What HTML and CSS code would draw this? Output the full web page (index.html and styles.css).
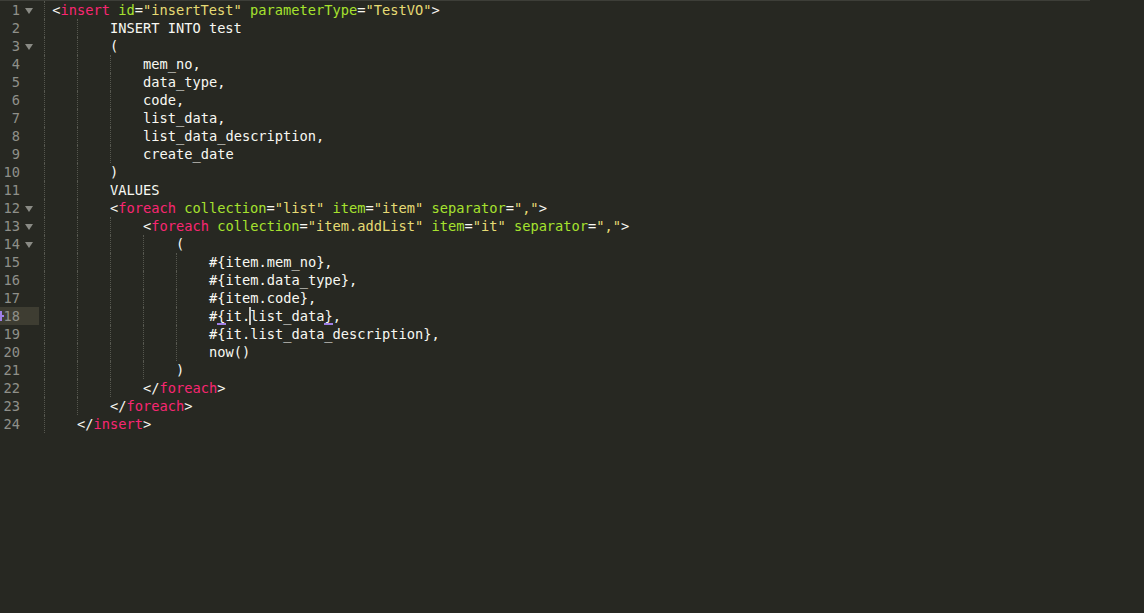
FILE: index.html
```html
<!DOCTYPE html>
<html>
<head>
<meta charset="utf-8">
<link rel="stylesheet" href="styles.css">
</head>
<body>
<div class="topbar"></div>
<div class="editor">
  <div class="line"><div class="gutter"><span class="num">1</span><span class="fold"></span></div><div class="code"><span class="sp"></span><span class="p">&lt;</span><span class="t">insert</span> <span class="a">id</span>=<span class="s">"insertTest"</span> <span class="a">parameterType</span>=<span class="s">"TestVO"</span><span class="p">&gt;</span></div></div>
  <div class="line"><div class="gutter"><span class="num">2</span><span class="nofold"></span></div><div class="code"><span class="tab"></span><span class="tab"></span>INSERT INTO test</div></div>
  <div class="line"><div class="gutter"><span class="num">3</span><span class="fold"></span></div><div class="code"><span class="tab"></span><span class="tab"></span>(</div></div>
  <div class="line"><div class="gutter"><span class="num">4</span><span class="nofold"></span></div><div class="code"><span class="tab"></span><span class="tab"></span><span class="tab"></span>mem_no,</div></div>
  <div class="line"><div class="gutter"><span class="num">5</span><span class="nofold"></span></div><div class="code"><span class="tab"></span><span class="tab"></span><span class="tab"></span>data_type,</div></div>
  <div class="line"><div class="gutter"><span class="num">6</span><span class="nofold"></span></div><div class="code"><span class="tab"></span><span class="tab"></span><span class="tab"></span>code,</div></div>
  <div class="line"><div class="gutter"><span class="num">7</span><span class="nofold"></span></div><div class="code"><span class="tab"></span><span class="tab"></span><span class="tab"></span>list_data,</div></div>
  <div class="line"><div class="gutter"><span class="num">8</span><span class="nofold"></span></div><div class="code"><span class="tab"></span><span class="tab"></span><span class="tab"></span>list_data_description,</div></div>
  <div class="line"><div class="gutter"><span class="num">9</span><span class="nofold"></span></div><div class="code"><span class="tab"></span><span class="tab"></span><span class="tab"></span>create_date</div></div>
  <div class="line"><div class="gutter"><span class="num">10</span><span class="nofold"></span></div><div class="code"><span class="tab"></span><span class="tab"></span>)</div></div>
  <div class="line"><div class="gutter"><span class="num">11</span><span class="nofold"></span></div><div class="code"><span class="tab"></span><span class="tab"></span>VALUES</div></div>
  <div class="line"><div class="gutter"><span class="num">12</span><span class="fold"></span></div><div class="code"><span class="tab"></span><span class="tab"></span><span class="p">&lt;</span><span class="t">foreach</span> <span class="a">collection</span>=<span class="s">"list"</span> <span class="a">item</span>=<span class="s">"item"</span> <span class="a">separator</span>=<span class="s">","</span><span class="p">&gt;</span></div></div>
  <div class="line"><div class="gutter"><span class="num">13</span><span class="fold"></span></div><div class="code"><span class="tab"></span><span class="tab"></span><span class="tab"></span><span class="p">&lt;</span><span class="t">foreach</span> <span class="a">collection</span>=<span class="s">"item.addList"</span> <span class="a">item</span>=<span class="s">"it"</span> <span class="a">separator</span>=<span class="s">","</span><span class="p">&gt;</span></div></div>
  <div class="line"><div class="gutter"><span class="num">14</span><span class="fold"></span></div><div class="code"><span class="tab"></span><span class="tab"></span><span class="tab"></span><span class="tab"></span>(</div></div>
  <div class="line"><div class="gutter"><span class="num">15</span><span class="nofold"></span></div><div class="code"><span class="tab"></span><span class="tab"></span><span class="tab"></span><span class="tab"></span><span class="tab"></span>#{item.mem_no},</div></div>
  <div class="line"><div class="gutter"><span class="num">16</span><span class="nofold"></span></div><div class="code"><span class="tab"></span><span class="tab"></span><span class="tab"></span><span class="tab"></span><span class="tab"></span>#{item.data_type},</div></div>
  <div class="line"><div class="gutter"><span class="num">17</span><span class="nofold"></span></div><div class="code"><span class="tab"></span><span class="tab"></span><span class="tab"></span><span class="tab"></span><span class="tab"></span>#{item.code},</div></div>
  <div class="line"><div class="gutter current"><span class="mark"></span><span class="num">18</span><span class="nofold"></span></div><div class="code"><span class="tab"></span><span class="tab"></span><span class="tab"></span><span class="tab"></span><span class="tab"></span>#<span class="match">{</span>it.<span class="caret"></span>list_data<span class="match">}</span>,</div></div>
  <div class="line"><div class="gutter"><span class="num">19</span><span class="nofold"></span></div><div class="code"><span class="tab"></span><span class="tab"></span><span class="tab"></span><span class="tab"></span><span class="tab"></span>#{it.list_data_description},</div></div>
  <div class="line"><div class="gutter"><span class="num">20</span><span class="nofold"></span></div><div class="code"><span class="tab"></span><span class="tab"></span><span class="tab"></span><span class="tab"></span><span class="tab"></span>now()</div></div>
  <div class="line"><div class="gutter"><span class="num">21</span><span class="nofold"></span></div><div class="code"><span class="tab"></span><span class="tab"></span><span class="tab"></span><span class="tab"></span>)</div></div>
  <div class="line"><div class="gutter"><span class="num">22</span><span class="nofold"></span></div><div class="code"><span class="tab"></span><span class="tab"></span><span class="tab"></span><span class="p">&lt;/</span><span class="t">foreach</span><span class="p">&gt;</span></div></div>
  <div class="line"><div class="gutter"><span class="num">23</span><span class="nofold"></span></div><div class="code"><span class="tab"></span><span class="tab"></span><span class="p">&lt;/</span><span class="t">foreach</span><span class="p">&gt;</span></div></div>
  <div class="line"><div class="gutter"><span class="num">24</span><span class="nofold"></span></div><div class="code"><span class="tab"></span><span class="p">&lt;/</span><span class="t">insert</span><span class="p">&gt;</span></div></div>
</div>
</body>
</html>
```

FILE: styles.css
```css
html, body {
  margin: 0;
  padding: 0;
  background: #272822;
  height: 100%;
  overflow: hidden;
}

body {
  font-family: "DejaVu Sans Mono", "Liberation Mono", monospace;
  font-size: 13.7px;
  color: #f8f8f2;
}

.topbar {
  width: 1090px;
  height: 1px;
  background: #3d3e38;
}

.editor {
  display: flex;
  flex-direction: column;
}

.line {
  display: flex;
  height: 18px;
  line-height: 18px;
  white-space: pre;
}

.gutter {
  position: relative;
  display: flex;
  align-items: center;
  width: 39px;
  margin-right: 5px;
  flex: none;
}

.gutter.current {
  background: #3e3d32;
}

.num {
  width: 20px;
  text-align: right;
  color: #8f908a;
}

.fold {
  width: 0;
  height: 0;
  margin-left: 5px;
  margin-top: 1px;
  border-left: 4.5px solid transparent;
  border-right: 4.5px solid transparent;
  border-top: 6px solid #8a8b85;
}

.nofold {
  width: 9px;
}

.mark {
  position: absolute;
  left: 0;
  top: 4px;
  width: 2px;
  height: 10px;
  background: #9f7fe6;
}

.mark::after {
  content: "";
  position: absolute;
  left: 0;
  top: 4px;
  width: 4px;
  height: 2px;
  background: #9f7fe6;
}

.code {
  display: block;
  height: 18px;
}

.tab {
  display: inline-block;
  vertical-align: top;
  width: 33px;
  height: 18px;
  box-sizing: border-box;
  border-left: 1px dotted #56574f;
}

.sp {
  display: inline-block;
  vertical-align: top;
  width: 8.25px;
  height: 18px;
  box-sizing: border-box;
  border-left: 1px dotted #56574f;
}

.p { color: #f8f8f2; }
.t { color: #f92672; }
.a { color: #a6e22e; }
.s { color: #e6db74; }

.match {
  display: inline-block;
  vertical-align: top;
  height: 18px;
  box-sizing: border-box;
  border-bottom: 2px solid #9f7fe6;
  line-height: 18px;
}

.caret {
  position: relative;
  display: inline-block;
  vertical-align: top;
  width: 0;
  height: 18px;
}

.caret::after {
  content: "";
  position: absolute;
  left: -1px;
  top: 0;
  width: 2px;
  height: 18px;
  background: #c9c9c4;
}
```
